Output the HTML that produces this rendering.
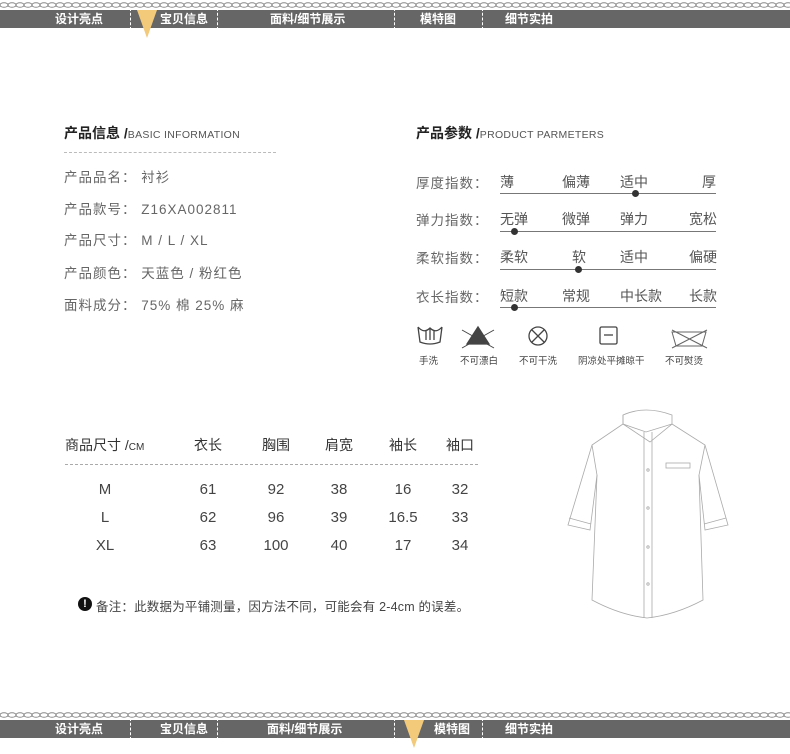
<!DOCTYPE html>
<html><head><meta charset="utf-8"><style>
*{margin:0;padding:0;box-sizing:border-box}
body{width:790px;height:754px;background:#fff;position:relative;overflow:hidden;font-family:"Liberation Sans","Noto Sans CJK SC",sans-serif;color:#555}
.a{position:absolute;white-space:nowrap}
.bar{position:absolute;left:0;width:790px;height:18px;background:#666}
.nav{position:absolute;color:#fff;font-size:12px;line-height:18px;font-weight:bold}
.sep{position:absolute;width:0;height:22px;border-left:1px dashed #fff}
.t{font-size:14px;font-weight:bold;color:#222}
.t small{font-size:10.5px;font-weight:normal;color:#555;letter-spacing:.3px}
.r{font-size:13.5px;color:#666;letter-spacing:1px}
.o{font-size:14px;color:#555}
.ln{position:absolute;height:1px;background:#777;left:500px;width:216px}
.dot{position:absolute;width:7px;height:7px;border-radius:50%;background:#333}
.ic{font-size:9.5px;color:#444}
.c{position:absolute;text-align:center;transform:translateX(-50%);font-size:15px;color:#444}
</style></head><body>
<svg class="a" style="left:0;top:0" width="790" height="10"><defs><pattern id="ch" width="8" height="10" patternUnits="userSpaceOnUse"><ellipse cx="4" cy="5" rx="4" ry="2.3" fill="none" stroke="#888" stroke-width="1"/></pattern></defs><rect width="790" height="10" fill="url(#ch)"/></svg>
<div class="bar" style="top:10px"></div>
<div class="nav" style="left:55px;top:10px">设计亮点</div>
<div class="nav" style="left:160px;top:10px">宝贝信息</div>
<div class="nav" style="left:270px;top:10px">面料/细节展示</div>
<div class="nav" style="left:420px;top:10px">模特图</div>
<div class="nav" style="left:505px;top:10px">细节实拍</div>
<div class="sep" style="left:130px;top:8px"></div><div class="sep" style="left:217px;top:8px"></div><div class="sep" style="left:394px;top:8px"></div><div class="sep" style="left:482px;top:8px"></div>
<svg class="a" style="left:137px;top:10px" width="20" height="30"><polygon points="0,0 20,0 10,28" fill="#f3c97a"/></svg>

<div class="a t" style="left:64px;top:123px">产品信息 /<small>BASIC INFORMATION</small></div>
<div class="a" style="left:64px;top:152px;width:212px;border-top:1px dashed #bbb"></div>
<div class="a r" style="left:64px;top:166px">产品品名：&nbsp;衬衫</div>
<div class="a r" style="left:64px;top:198px">产品款号：&nbsp;Z16XA002811</div>
<div class="a r" style="left:64px;top:229px">产品尺寸：&nbsp;M / L / XL</div>
<div class="a r" style="left:64px;top:262px">产品颜色：&nbsp;天蓝色 / 粉红色</div>
<div class="a r" style="left:64px;top:294px">面料成分：&nbsp;75% 棉 25% 麻</div>

<div class="a t" style="left:416px;top:123px">产品参数 /<small>PRODUCT PARMETERS</small></div>
<div class="a r" style="left:416px;top:172px">厚度指数：</div>
<div class="a o" style="left:500px;top:172px">薄</div><div class="a o" style="left:562px;top:172px">偏薄</div><div class="a o" style="left:620px;top:172px">适中</div><div class="a o" style="left:702px;top:172px">厚</div>
<div class="ln" style="top:193px"></div><div class="dot" style="left:632px;top:190px"></div>
<div class="a r" style="left:416px;top:209px">弹力指数：</div>
<div class="a o" style="left:500px;top:209px">无弹</div><div class="a o" style="left:562px;top:209px">微弹</div><div class="a o" style="left:620px;top:209px">弹力</div><div class="a o" style="left:689px;top:209px">宽松</div>
<div class="ln" style="top:231px"></div><div class="dot" style="left:511px;top:228px"></div>
<div class="a r" style="left:416px;top:247px">柔软指数：</div>
<div class="a o" style="left:500px;top:247px">柔软</div><div class="a o" style="left:572px;top:247px">软</div><div class="a o" style="left:620px;top:247px">适中</div><div class="a o" style="left:689px;top:247px">偏硬</div>
<div class="ln" style="top:269px"></div><div class="dot" style="left:575px;top:266px"></div>
<div class="a r" style="left:416px;top:286px">衣长指数：</div>
<div class="a o" style="left:500px;top:286px">短款</div><div class="a o" style="left:562px;top:286px">常规</div><div class="a o" style="left:620px;top:286px">中长款</div><div class="a o" style="left:689px;top:286px">长款</div>
<div class="ln" style="top:307px"></div><div class="dot" style="left:511px;top:304px"></div>

<svg class="a" style="left:410px;top:322px" width="310" height="30" fill="none" stroke="#444" stroke-width="1.3">
<path d="M8 5 L10 20 Q20 24 30 20 L32 5 M8 5 Q14 12 20 6 Q26 12 32 5 M16 9 v9 M20 7 v11 M24 9 v9"/>
<path d="M57 22 L68 5 L79 22 Z" fill="#444"/><path d="M52 8 L84 26 M52 26 L84 8" stroke-width="1"/>
<circle cx="128" cy="14" r="9"/><path d="M122 8 L134 20 M134 8 L122 20"/>
<rect x="190" y="5" width="17" height="17" rx="1.5"/><path d="M194 13 h9"/>
<path d="M262 10 L296 10 L292 24 L266 24 Z M262 8 L297 26 M262 26 L297 8" stroke-width="1" stroke="#666"/>
</svg>
<div class="a ic" style="left:419px;top:353px">手洗</div>
<div class="a ic" style="left:460px;top:353px">不可漂白</div>
<div class="a ic" style="left:519px;top:353px">不可干洗</div>
<div class="a ic" style="left:578px;top:353px">阴凉处平摊晾干</div>
<div class="a ic" style="left:665px;top:353px">不可熨烫</div>

<div class="a" style="left:65px;top:435px;font-size:14px;color:#333">商品尺寸 /<span style="font-size:10px">CM</span></div>
<div class="c" style="left:208px;top:435px;font-size:14px;color:#333">衣长</div>
<div class="c" style="left:276px;top:435px;font-size:14px;color:#333">胸围</div>
<div class="c" style="left:339px;top:435px;font-size:14px;color:#333">肩宽</div>
<div class="c" style="left:403px;top:435px;font-size:14px;color:#333">袖长</div>
<div class="c" style="left:460px;top:435px;font-size:14px;color:#333">袖口</div>
<div class="a" style="left:65px;top:464px;width:413px;border-top:1px dashed #aaa"></div>
<div class="c" style="left:105px;top:481px">M</div><div class="c" style="left:208px;top:481px">61</div><div class="c" style="left:276px;top:481px">92</div><div class="c" style="left:339px;top:481px">38</div><div class="c" style="left:403px;top:481px">16</div><div class="c" style="left:460px;top:481px">32</div>
<div class="c" style="left:105px;top:509px">L</div><div class="c" style="left:208px;top:509px">62</div><div class="c" style="left:276px;top:509px">96</div><div class="c" style="left:339px;top:509px">39</div><div class="c" style="left:403px;top:509px">16.5</div><div class="c" style="left:460px;top:509px">33</div>
<div class="c" style="left:105px;top:537px">XL</div><div class="c" style="left:208px;top:537px">63</div><div class="c" style="left:276px;top:537px">100</div><div class="c" style="left:339px;top:537px">40</div><div class="c" style="left:403px;top:537px">17</div><div class="c" style="left:460px;top:537px">34</div>
<div class="a" style="left:78px;top:597px;width:14px;height:14px;border-radius:50%;background:#111;color:#fff;font-size:11px;font-weight:bold;text-align:center;line-height:14px">!</div>
<div class="a" style="left:96px;top:596px;font-size:12.5px;color:#444;letter-spacing:.2px">备注：此数据为平铺测量，因方法不同，可能会有 2-4cm 的误差。</div>

<svg class="a" style="left:560px;top:400px" width="180" height="220" fill="none" stroke="#aaa" stroke-width="0.8">
<path d="M63 15 Q85 5 112 15 L112 24 L90 42 L63 24 Z"/>
<path d="M63 24 L63 15 M63 24 L86 32 L112 24"/>
<path d="M63 24 L32 45 L8 125 L30 130 L37 75"/>
<path d="M112 24 L145 45 L168 125 L145 130 L139 75"/>
<path d="M9 118 L31 124 M166 118 L144 124"/>
<path d="M32 45 L37 75 L32 200 Q60 215 87 218 Q115 215 143 200 L139 75 L145 45"/>
<path d="M84 32 L84 218 M92 32 L92 218"/>
<rect x="106" y="63" width="24" height="5"/>
<circle cx="88" cy="70" r="1.2"/><circle cx="88" cy="108" r="1.2"/><circle cx="88" cy="147" r="1.2"/><circle cx="88" cy="184" r="1.2"/>
</svg>

<svg class="a" style="left:0;top:710px" width="790" height="10"><rect width="790" height="10" fill="url(#ch)"/></svg>
<div class="bar" style="top:720px"></div>
<div class="nav" style="left:55px;top:720px">设计亮点</div>
<div class="nav" style="left:160px;top:720px">宝贝信息</div>
<div class="nav" style="left:267px;top:720px">面料/细节展示</div>
<div class="nav" style="left:434px;top:720px">模特图</div>
<div class="nav" style="left:505px;top:720px">细节实拍</div>
<div class="sep" style="left:130px;top:718px"></div><div class="sep" style="left:217px;top:718px"></div><div class="sep" style="left:394px;top:718px"></div><div class="sep" style="left:482px;top:718px"></div>
<svg class="a" style="left:404px;top:720px" width="20" height="30"><polygon points="0,0 20,0 10,28" fill="#f3c97a"/></svg>
</body></html>
